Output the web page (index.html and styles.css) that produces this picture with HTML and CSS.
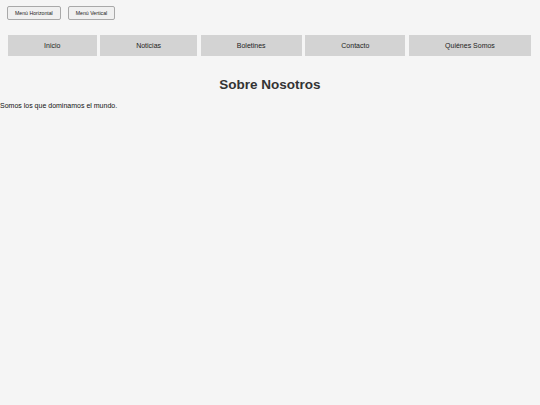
FILE: index.html
```html
<!DOCTYPE html>
<html lang="es">
<head>
<meta charset="utf-8">
<title>Sobre Nosotros</title>
<link rel="stylesheet" href="styles.css">
</head>
<body>
<div class="toolbar">
  <button class="toggle">Menú Horizontal</button>
  <button class="toggle">Menú Vertical</button>
</div>
<nav class="menu">
  <a class="menu-item" href="#">Inicio</a>
  <a class="menu-item" href="#">Noticias</a>
  <a class="menu-item" href="#">Boletines</a>
  <a class="menu-item" href="#">Contacto</a>
  <a class="menu-item" href="#">Quiénes Somos</a>
</nav>
<main class="content">
  <h1 class="title">Sobre Nosotros</h1>
  <p class="text">Somos los que dominamos el mundo.</p>
</main>
</body>
</html>
```

FILE: styles.css
```css
html, body {
  margin: 0;
  padding: 0;
  background: #f5f5f5;
  font-family: "Liberation Sans", Arial, sans-serif;
  color: #222;
}

.toolbar {
  display: flex;
  gap: 7px;
  padding: 6px 7px 0;
}

.toggle {
  font-family: "Liberation Sans", Arial, sans-serif;
  font-size: 5.2px;
  height: 14px;
  padding: 0 7px;
  border: 1px solid #a9a9a9;
  border-radius: 2px;
  background: #f0f0f0;
  color: #222;
}

.menu {
  display: flex;
  gap: 3.5px;
  margin: 15px 9px 0 8px;
}

.menu-item {
  flex: 1 1 auto;
  height: 21px;
  line-height: 21px;
  background: #d3d3d3;
  color: #222;
  text-align: center;
  text-decoration: none;
  font-size: 7px;
}

.content {
  padding-top: 21px;
}

.title {
  margin: 0;
  text-align: center;
  font-size: 13.5px;
  line-height: 16px;
  color: #333;
}

.text {
  margin: 9px 0 0;
  font-size: 7px;
  line-height: 8px;
  color: #111;
}
```
